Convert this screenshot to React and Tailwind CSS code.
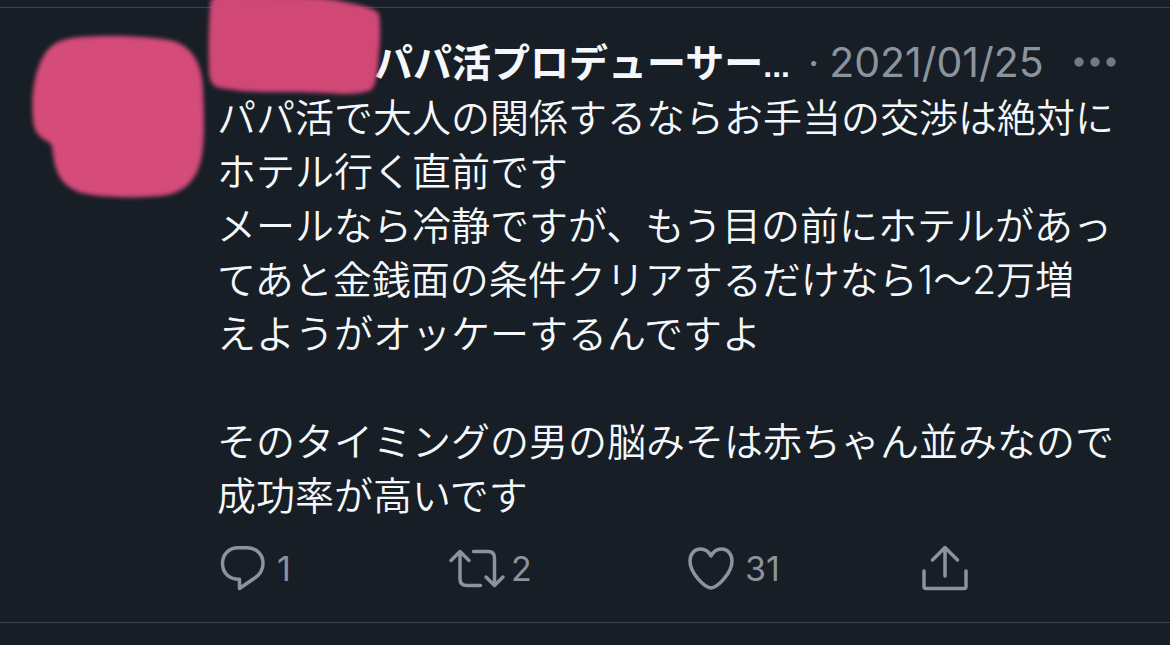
import { useState } from 'react'

const body = `パパ活で大人の関係するならお手当の交渉は絶対に
ホテル行く直前です
メールなら冷静ですが、もう目の前にホテルがあっ
てあと金銭面の条件クリアするだけなら1〜2万増
えようがオッケーするんですよ

そのタイミングの男の脳みそは赤ちゃん並みなので
成功率が高いです`

function Icon({ children }) {
  return (
    <svg
      className="w-[52px] h-12 shrink-0 overflow-visible"
      fill="none"
      stroke="currentColor"
      strokeWidth="3.5"
      strokeLinecap="round"
      strokeLinejoin="round"
      aria-hidden="true"
    >
      {children}
    </svg>
  )
}

function Action({ label, count, onClick, children }) {
  return (
    <button type="button" aria-label={label} onClick={onClick} className="flex items-center gap-2 cursor-pointer">
      {children}
      {count && <span className="text-[34px] leading-12">{count}</span>}
    </button>
  )
}

export default function App() {
  const [liked, setLiked] = useState(false)

  return (
    <div className="min-h-screen bg-[#171e26] pt-[7px] overflow-hidden font-[Inter,'Noto_Sans_CJK_JP',sans-serif] text-[#f5f8fa]">
      <article className="flex gap-3.5 border-y border-[#39434c] pl-8 pr-[53px] pt-7 pb-[29px]">
        {/* Avatar */}
        <svg className="w-[171px] h-[162px] shrink-0 overflow-visible blur-[2px]" aria-hidden="true">
          <path
            fill="#d54b7a"
            d="M50 1C80 -1 120 0 141 5C160 10 170 28 171 52C172 76 173 102 170 119C166 145 151 158 128 160C104 162 74 162 55 158C34 154 25 142 22 124C20 114 21 110 18 107C9 102 2 97 1 85C-1 62 1 38 12 19C20 6 32 2 50 1Z"
          />
        </svg>

        <div className="min-w-0 flex-1">
          {/* Name, date and menu */}
          <header className="flex items-center h-13 mb-[3px] text-[39px] leading-none">
            <div className="relative w-[157px] h-13 shrink-0">
              <svg className="absolute -left-[9px] -top-9 w-[174px] h-[94px] overflow-visible blur-[2px]" aria-hidden="true">
                <path
                  fill="#d14877"
                  d="M3 0C1 8 0 55 1 73C2 86 9 89 21 89C31 91 38 92 60 92C85 92 110 92 131 94C148 94 161 93 165 88C169 80 170 68 171 52C173 35 172 20 171 14C167 8 155 6 142 3C130 0 115 -2 98 -3L10 -4Z"
                />
              </svg>
            </div>
            <h1 className="flex items-baseline font-bold whitespace-nowrap">
              パパ活プロデューサー<span className="font-['Liberation_Sans',sans-serif] text-[32px]">...</span>
            </h1>
            <span className="ml-[18px] mr-2.5 text-[#8b949c]">·</span>
            <time dateTime="2021-01-25" className="text-[41px] text-[#8b949c]">2021/01/25</time>
            <button type="button" aria-label="More" className="ml-auto text-[#717a83] cursor-pointer">
              <svg className="w-[43px] h-3" fill="currentColor" aria-hidden="true">
                <circle cx="5" cy="6" r="4.7" />
                <circle cx="21" cy="6" r="4.7" />
                <circle cx="37" cy="6" r="4.7" />
              </svg>
            </button>
          </header>

          <p className="text-[39px] leading-[54px] font-[350] whitespace-pre">{body}</p>

          {/* Actions */}
          <div className="grid grid-cols-4 -mr-9 mt-[22px] text-[#8b949c]">
            <Action label="Reply" count="1">
              <Icon>
                <path d="M21 2.8H30C39.5 2.8 46 9.5 46 18.5C46 25 42.5 30 37 33.5L22.5 43.5V34.2C13 34.5 5.5 28.5 5.5 18.5C5.5 9.5 12 2.8 21 2.8Z" />
              </Icon>
            </Action>
            <Action label="Retweet" count="2">
              <Icon>
                <path d="M0 15.5L9 6.5L18 15.5M9 7V34Q9 40.5 16 40.5H29.5" />
                <path d="M22.5 6.5H37Q43.5 6.5 43.5 13V40M35 32L43.5 40.5L52 32" />
              </Icon>
            </Action>
            <Action label="Like" count={liked ? '32' : '31'} onClick={() => setLiked(!liked)}>
              <Icon>
                <path d="M26 11C23.5 6 19.5 4 15.5 4C9 4 5 9.5 5 16C5 28 19 42 26 43C33 42 47 28 47 16C47 9.5 43 4 36.5 4C32.5 4 28.5 6 26 11Z" />
              </Icon>
            </Action>
            <Action label="Share">
              <Icon>
                <path d="M13.5 15L26 2.5L38.5 15M26 3V31" />
                <path d="M5 26V41.5Q5 43.5 7 43.5H45Q47 43.5 47 41.5V26" />
              </Icon>
            </Action>
          </div>
        </div>
      </article>
    </div>
  )
}
